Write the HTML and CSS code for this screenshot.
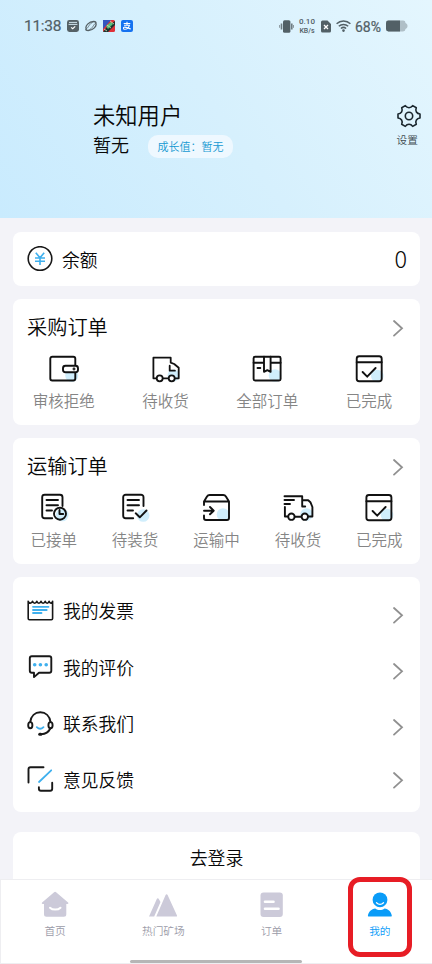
FILE: index.html
```html
<!DOCTYPE html>
<html lang="zh-CN">
<head>
<meta charset="utf-8">
<title>我的</title>
<link rel="stylesheet" href="styles.css">
</head>
<body>
<div class="screen">
  <header class="hero">
    <div class="status">
      <span class="clock">11:38</span>
      <svg class="s-app" width="12" height="12" viewBox="0 0 12 12"><rect width="12" height="12" rx="2.4" fill="#556166"/><path d="M2 2.4h8M1.6 4.4h8.8" stroke="#dff2fc" stroke-width=".9"/><path d="M4.1 7.4l1.6 1.4 2.5-2.4" fill="none" stroke="#fff" stroke-width="1.2"/></svg>
      <svg class="s-app" width="12" height="12" viewBox="0 0 12 12" fill="none" stroke="#556166" stroke-width="1.3" stroke-linecap="round"><path d="M1.200 9C-.2 6 4 1.500 8.600 1.500c1.200 0 2 .3 2.400.8M10.800 3c1.400 3-2.800 7.500-7.400 7.500-1.200 0-2-.2-2.600-.8"/><path d="M1.200 9C3.500 8 4 3.500 8.600 1.500M10.800 3C8.500 4 8 8.500 3.400 10.500" stroke-width=".8"/></svg>
      <svg class="s-app" width="12" height="12" viewBox="0 0 12 12"><rect width="12" height="12" rx="1.500" fill="#df3038"/><path d="M0 0h8L0 9z" fill="#3455bf"/><path d="M0 12l4-5 8-6v4L5 12z" fill="#1d342f"/><path d="M3 6l5-4 2 2-5 5z" fill="#54c27b"/><path d="M1 9l3 2M7 1l4 3M4 5l4 3" stroke="#d5dfb2" stroke-width=".8"/></svg>
      <svg class="s-app" width="12" height="12" viewBox="0 0 12 12"><rect width="12" height="12" rx="2" fill="#1672f0"/><path d="M2.700 3.400h6.600M6 1.800v3.400M3 5.300h5.400C7.800 7.300 5.800 9.300 3.800 9.300c-1.800 0-1.900-2.200 0-2.200 1.800 0 3.700 1.400 6 2" fill="none" stroke="#fff" stroke-width="1.050"/></svg>
      <span class="spacer"></span>
      <svg class="s-vib" width="15" height="13" viewBox="0 0 15 13"><rect x="4" y=".3" width="7.400" height="12.400" rx="1.500" fill="#526066"/><path d="M2.500 3.400v6M12.800 3.400v6" stroke="#6d7b81" stroke-width="1.600"/><path d="M.6 5v2.800M14.500 5v2.800" stroke="#8a979d" stroke-width="1"/></svg>
      <span class="rate"><span>0.10</span><span class="unit">KB/s</span></span>
      <svg class="s-sim" width="10" height="13" viewBox="0 0 10 13"><path d="M1.500.5h5L10 4v7a1.500 1.500 0 0 1-1.500 1.500h-7A1.500 1.500 0 0 1 0 11V2A1.500 1.500 0 0 1 1.500.5z" fill="#526066"/><path d="M3 5l4 4M7 5L3 9" stroke="#fff" stroke-width="1.300"/></svg>
      <svg class="s-wifi" width="15" height="12" viewBox="0 0 15 12" fill="none" stroke="#526066" stroke-width="1.500"><path d="M.6 3.800a10 10 0 0 1 13.800 0M2.800 6.200a7 7 0 0 1 9.400 0M4.900 8.500a4 4 0 0 1 5.200 0"/><circle cx="7.500" cy="10.600" r=".6" fill="#526066"/></svg>
      <span class="pct">68%</span>
      <svg class="s-bat" width="22" height="12" viewBox="0 0 22 12"><rect x="0" y=".5" width="19.500" height="11" rx="2.400" fill="#afbfc7"/><path d="M19 3c2 .6 2.500 1.600 2.500 3S21 8.400 19 9z" fill="#afbfc7"/><path d="M2.400.5H14v11H2.400A2.400 2.400 0 0 1 0 9.100V2.900A2.400 2.400 0 0 1 2.400.5z" fill="#526066"/></svg>
    </div>
    <div class="profile">
      <div class="who">
        <h1 class="name">未知用户</h1>
        <div class="sub"><span class="level">暂无</span><span class="pill">成长值：暂无</span></div>
      </div>
      <div class="settings">
        <svg width="24" height="24" viewBox="0 0 24 24" fill="none" stroke="#1b272e" stroke-width="1.600" stroke-linejoin="round"><path d="M8.300 1.600C9.500 3.300 10.600 3.700 12 3.700s2.500-.4 3.700-2.100l3.600 2.100c-.8 2-.6 3.200.1 4.300.8 1.200 1.700 1.800 3.600 2v4c-1.900.2-2.800.8-3.600 2-.7 1.100-.9 2.300-.1 4.300l-3.600 2.100c-1.200-1.700-2.300-2.100-3.700-2.100s-2.500.4-3.700 2.100l-3.600-2.100c.8-2 .6-3.200-.1-4.300-.8-1.200-1.700-1.800-3.600-2v-4c1.900-.2 2.800-.8 3.600-2 .7-1.100.9-2.300.1-4.300z"/><circle cx="12" cy="12" r="3.700"/></svg>
        <span>设置</span>
      </div>
    </div>
  </header>

  <main class="content">
    <section class="card balance">
      <svg width="26" height="26" viewBox="0 0 26 26" fill="none"><circle cx="13" cy="12.500" r="11.800" stroke="#181818" stroke-width="1.600"/><path d="M8.800 6.800l4.200 4.900 4.200-4.900M13 11.700v7.300M8 12h10M8 15.200h10" stroke="#3fb0ee" stroke-width="1.600"/></svg>
      <span class="balance-label">余额</span>
      <span class="amount">0</span>
    </section>

    <section class="card orders">
      <div class="card-head"><h2>采购订单</h2><svg class="chev" viewBox="0 0 12 18"><path d="M2 2l8 7.300-8 7.300"/></svg></div>
      <div class="grid four">
        <div class="cell"><svg class="ico" viewBox="0 0 32 32"><circle class="tint" cx="23.700" cy="22.500" r="6.500"/><path d="M27.300 12.700V5.700a2 2 0 0 0-2-2H4.300a2 2 0 0 0-2 2v19.800a2 2 0 0 0 2 2h21a2 2 0 0 0 2-2v-6"/><rect x="15" y="12.700" width="15" height="6.600" rx="2.500" fill="#fff"/><circle cx="26" cy="16" r=".5"/></svg><span>审核拒绝</span></div>
        <div class="cell"><svg class="ico thin" viewBox="0 0 32 32"><circle class="tint" cx="23.500" cy="22.500" r="6"/><path d="M6.700 25.300H3.400V4.700h17.300v5l3.500 1.300 4.500 3.800v10.500h-4M12.700 25.300h6M19.700 12.700v5h5.200"/><circle cx="9.700" cy="25.300" r="3" fill="#fff"/><circle cx="21.700" cy="25.300" r="3" fill="#fff"/></svg><span>待收货</span></div>
        <div class="cell"><svg class="ico" viewBox="0 0 32 32"><circle class="tint" cx="24" cy="22.500" r="6.300"/><rect x="2.600" y="3.800" width="27" height="23.700" rx="1.500"/><path d="M2.600 9.800H13M19.600 9.800h10M13 3.800v15l3.300-1.700 3.300 1.700v-15M6.500 15h2.800"/></svg><span>全部订单</span></div>
        <div class="cell"><svg class="ico" viewBox="0 0 32 32"><circle class="tint" cx="24.300" cy="23" r="6.300"/><rect x="3.700" y="3.200" width="25" height="25" rx="2.500"/><path d="M3.700 9.300h25M9.600 19l4.600 4.700 8.400-8.700"/></svg><span>已完成</span></div>
      </div>
    </section>

    <section class="card orders">
      <div class="card-head"><h2>运输订单</h2><svg class="chev" viewBox="0 0 12 18"><path d="M2 2l8 7.300-8 7.300"/></svg></div>
      <div class="grid five">
        <div class="cell"><svg class="ico" viewBox="0 0 32 32"><circle class="tint" cx="24.300" cy="23" r="6.300"/><path d="M24.500 14V5.200a2.500 2.500 0 0 0-2.500-2.500H6.700a2.500 2.500 0 0 0-2.500 2.500v18.500a2.500 2.500 0 0 0 2.500 2.500h7.500M8.500 8h11.500M8.500 13.200h11.500M8.500 18.500H14"/><circle cx="22" cy="21.700" r="6"/><path d="M21.500 18v4h3.700"/></svg><span>已接单</span></div>
        <div class="cell"><svg class="ico" viewBox="0 0 32 32"><circle class="tint" cx="24.200" cy="23.500" r="6.300"/><path d="M24.500 14V5.200A2.500 2.500 0 0 0 22 2.700H6.700a2.500 2.500 0 0 0-2.500 2.500v18.500a2.500 2.500 0 0 0 2.500 2.500h7.500M8.500 8h11.500M8.500 13.200h11.500M8.500 18.500H14M16.700 21.300l4.100 4 6.700-6.800"/></svg><span>待装货</span></div>
        <div class="cell"><svg class="ico" viewBox="0 0 32 32"><circle class="tint" cx="23" cy="22.500" r="6.300"/><path d="M4 13V9.500l3-5a3 3 0 0 1 2.600-1.500h13.700c1 0 2 .5 2.600 1.500l3.100 5V26a2 2 0 0 1-2 2H6a2 2 0 0 1-2-2v-2.500M4 9.500h25M4 18.700h9.500M10 15l3.700 3.700-3.700 3.600"/></svg><span>运输中</span></div>
        <div class="cell"><svg class="ico" viewBox="0 0 32 32"><circle class="tint" cx="24.500" cy="22.500" r="6.300"/><path d="M2.500 4.300h17.700v10.200h3M20.200 8.200h6l2.200 2 2 4.800v9.500h-4M2.500 8h9.500M2.500 12H8M2.900 15v9.500h3M12.800 24.700h6.500"/><circle cx="9.400" cy="24.700" r="3.200" fill="#fff"/><circle cx="22.800" cy="24.700" r="3.200" fill="#fff"/></svg><span>待收货</span></div>
        <div class="cell"><svg class="ico" viewBox="0 0 32 32"><circle class="tint" cx="24" cy="23" r="6.300"/><rect x="3.400" y="3" width="25" height="25.200" rx="2.500"/><path d="M3.400 9.300h25M9.600 19l4.600 4.700 8.400-8.700"/></svg><span>已完成</span></div>
      </div>
    </section>

    <section class="card menu">
      <div class="row"><svg class="mico" viewBox="0 0 32 32"><path stroke-width="1.600" d="M4.200 6.200v17.300c0 .7.400 1.200 1.200 1.200h22c.8 0 1.200-.5 1.200-1.200V6.200M4.200 6.200C5 8.800 7.500 8.800 8.500 6.300c1 2.500 3.500 2.500 4.300 0 .8 2.500 3.300 2.500 4.200 0 .8 2.500 3.300 2.500 4.200 0 .8 2.500 3.100 2.500 3.900 0 .8 2.500 2.900 2.500 3.500-.1"/><path class="blue" d="M9 11.800h15.500M9 15h13.700M9 18h8.500"/></svg><span>我的发票</span><svg class="chev down" viewBox="0 0 12 18"><path d="M2 2l8 7.300-8 7.300"/></svg></div>
      <div class="row"><svg class="mico" viewBox="0 0 32 32"><path d="M10 20.800H7.800a2 2 0 0 1-2-2V6.300a2 2 0 0 1 2-2h17.500a2 2 0 0 1 2 2v12.500a2 2 0 0 1-2 2H15l-5 4.300z"/><g class="dots"><circle cx="10.700" cy="12.800" r="1.800"/><circle cx="16.400" cy="12.800" r="1.800"/><circle cx="22.200" cy="12.800" r="1.800"/></g></svg><span>我的评价</span><svg class="chev down" viewBox="0 0 12 18"><path d="M2 2l8 7.300-8 7.300"/></svg></div>
      <div class="row"><svg class="mico" viewBox="0 0 32 32"><path d="M6.200 14C7 8 11 4.300 16.300 4.300S25.700 8 26.500 14M26.300 20.500c-1.800 3.800-5 5.500-9 5.700"/><ellipse cx="6.300" cy="17.200" rx="2.100" ry="3.100"/><ellipse cx="26.500" cy="17.200" rx="2.100" ry="3.100"/><path stroke-width="3" d="M15.700 26.200h1"/><path class="blue" d="M12.800 19.200c2 1.900 4.700 1.900 6.700 0"/></svg><span>联系我们</span><svg class="chev down" viewBox="0 0 12 18"><path d="M2 2l8 7.300-8 7.300"/></svg></div>
      <div class="row"><svg class="mico" viewBox="0 0 32 32"><path d="M4.500 18.500V5.300a2 2 0 0 1 2-2H19.500M14.900 23.200v1.500a2 2 0 0 0 2 2h9.300a2 2 0 0 0 2-2V18.700"/><path class="blue" d="M15 18L27.200 6.300"/></svg><span>意见反馈</span><svg class="chev" viewBox="0 0 12 18"><path d="M2 2l8 7.300-8 7.300"/></svg></div>
    </section>

    <section class="card login">去登录</section>
  </main>

  <nav class="tabs">
    <div class="tab"><svg width="28" height="28" viewBox="0 0 28 28"><path fill="#cccad9" d="M13.100 2.200a1.500 1.500 0 0 1 2 0l12 10.300c.6.600.3 1.500-.6 1.500H25.300v10.200a2.500 2.500 0 0 1-2.500 2.500H5.500A2.500 2.500 0 0 1 3 24.200V14H1.700c-.9 0-1.200-.9-.6-1.500z"/><path d="M9 17.700c2.500 2.500 8 2.500 10.500 0" fill="none" stroke="#fff" stroke-width="2" stroke-linecap="round"/></svg><span>首页</span></div>
    <div class="tab"><svg width="28" height="28" viewBox="0 0 28 28"><path fill="#cccad9" d="M0 26.500L7.800 9c.4-1 1.600-1 2 0l1.700 3-6.300 14.500zM7.300 26.500L16.600 5c.5-1.100 1.500-1.100 2 0L28 25.500c.2.600-.1 1-.7 1z"/></svg><span>热门矿场</span></div>
    <div class="tab"><svg width="28" height="28" viewBox="0 0 28 28"><rect x="2.500" y="2.500" width="22.300" height="24.500" rx="3" fill="#cccad9"/><path d="M7 11.800h8.500M7 18.800h13.500" stroke="#fff" stroke-width="2.600" stroke-linecap="round"/></svg><span>订单</span></div>
    <div class="tab active"><svg width="28" height="28" viewBox="0 0 28 28"><path fill="#0a9cf8" d="M2.500 26.500c-.5 0-.7-.4-.6-1 .6-3.800 3.600-6.600 7.400-7.100 2.600 2 6.500 2 9.300 0 3.700.5 6.600 3.300 7.200 7.100.1.600-.1 1-.6 1z"/><circle cx="14" cy="9.800" r="7.400" fill="#0a9cf8"/><path d="M10.500 12.800c2 2 5 2 7 0" fill="none" stroke="#fff" stroke-width="1.300" stroke-linecap="round"/></svg><span>我的</span><i class="marker"></i></div>
    <div class="home-bar"></div>
  </nav>
</div>
</body>
</html>
```
FILE: styles.css
```css
* { box-sizing: border-box; }

body {
  margin: 0;
  background: #f3f3f8;
  font-family: "Noto Sans CJK SC", "Noto Sans", sans-serif;
  font-weight: 350;
  color: #080808;
}

h1, h2 { margin: 0; font-weight: inherit; }
svg { display: block; flex: none; }

.screen {
  width: 432px;
  height: 964px;
  overflow: hidden;
  display: flex;
  flex-direction: column;
}

/* Header */
.hero {
  flex: none;
  height: 218px;
  background: linear-gradient(55deg, #c9ebfe 0%, #d6f0fd 50%, #e4f6fe 100%);
}

.status {
  height: 52px;
  padding: 0 24px 0 24px;
  display: flex;
  align-items: center;
  color: #526066;
  font-family: Roboto, sans-serif;
  font-weight: 400;
}
.clock { width: 43px; font-size: 15.5px; letter-spacing: -0.3px; -webkit-text-stroke: 0.2px; }
.s-app { margin-right: 6px; }
.spacer { flex: 1; }
.s-vib { margin-right: 3px; }
.rate {
  width: 20px;
  display: flex;
  flex-direction: column;
  align-items: center;
  font: 500 8px/10px Roboto, sans-serif;
}
.rate .unit { font-size: 7px; line-height: 8px; }
.s-sim { margin-left: 4px; }
.s-wifi { margin: 0 4px 0 5px; }
.pct { width: 31px; font-size: 14px; margin-top: 1px; -webkit-text-stroke: 0.2px; }

.profile {
  display: flex;
  justify-content: space-between;
  padding: 45px 11px 0 93px;
}
.name { font-size: 22.300px; line-height: 34px; }
.sub { display: flex; align-items: center; height: 26px; }
.level { width: 55px; font-size: 18px; line-height: 26px; }
.pill {
  width: 85px;
  height: 23px;
  margin-top: 4px;
  border-radius: 10px;
  background: #eef8ff;
  color: #1499d2;
  font-size: 11px;
  line-height: 23px;
  text-align: center;
}
.settings {
  padding-top: 7px;
  display: flex;
  flex-direction: column;
  align-items: center;
  gap: 4px;
  font-size: 10.700px;
  line-height: 15px;
  color: #404b50;
}
.settings span { padding-right: 3px; }

/* Cards */
.content {
  flex: 1;
  min-height: 0;
  overflow: hidden;
  padding: 14px 12px 0 13px;
  display: flex;
  flex-direction: column;
  gap: 13px;
}
.card { flex: none; background: #fff; border-radius: 8px; }

.balance {
  height: 54px;
  padding: 0 13px 0 14px;
  display: flex;
  align-items: center;
}
.balance-label { margin: 0 0 0 9px; font-size: 17.800px; }
.amount { margin: -2px 0 0 auto; font-size: 23.500px; font-weight: 300; }

.orders { height: 126px; }
.card-head {
  height: 54px;
  padding: 4px 16px 0 14px;
  display: flex;
  align-items: center;
  justify-content: space-between;
}
.card-head h2 { margin-top: -2px; font-size: 20.200px; line-height: 30px; }
.chev {
  width: 12px;
  height: 18px;
  fill: none;
  stroke: #909090;
  stroke-width: 1.800;
  stroke-linecap: round;
}

.grid { display: grid; }
.four { grid-template-columns: repeat(4, 1fr); }
.five { grid-template-columns: repeat(5, 1fr); }
.cell { display: flex; flex-direction: column; align-items: center; }
.cell span { margin-top: 3px; font-size: 15.500px; line-height: 24px; color: #858585; }

.ico {
  width: 32px;
  height: 32px;
  fill: none;
  stroke: #111;
  stroke-width: 1.900;
  stroke-linecap: round;
  stroke-linejoin: round;
}
.thin { stroke-width: 1.800; }
.tint { fill: #d0eefc; stroke: none; }

.menu { height: 235px; padding-top: 6px; }
.row {
  height: 56.400px;
  padding: 0 16px 0 11px;
  display: flex;
  align-items: center;
}
.row span { margin: -2px auto 0 7px; font-size: 17.800px; }
.row .down { margin-top: 7px; }
.mico {
  width: 32px;
  height: 32px;
  fill: none;
  stroke: #181818;
  stroke-width: 1.900;
  stroke-linecap: round;
  stroke-linejoin: round;
}
.mico .blue { stroke: #3fb0ee; stroke-width: 1.800; }
.dots { fill: #3fb0ee; stroke: none; }

.login {
  height: 54px;
  margin-top: 7px;
  text-align: center;
  font-size: 17.900px;
  line-height: 50px;
}

/* Bottom navigation */
.tabs {
  position: relative;
  flex: none;
  width: 434px;
  height: 85px;
  padding: 10px 0 0 0;
  display: flex;
  background: #fff;
  border: solid #eeeef1;
  border-width: 1px 0 1px 1px;
}
.tab {
  position: relative;
  flex: 1;
  display: flex;
  flex-direction: column;
  align-items: center;
  gap: 5px;
  font-size: 10.700px;
  line-height: 15px;
  color: #9b9ba8;
}
.active { color: #0a9cf8; }
.marker {
  position: absolute;
  top: -13px;
  left: 22px;
  width: 64px;
  height: 80px;
  border: 5px solid #e71d25;
  border-radius: 12px;
}
.home-bar {
  position: absolute;
  left: 129px;
  bottom: 0;
  width: 172px;
  height: 3px;
  border-radius: 2px;
  background: #b6b6b6;
}
```
